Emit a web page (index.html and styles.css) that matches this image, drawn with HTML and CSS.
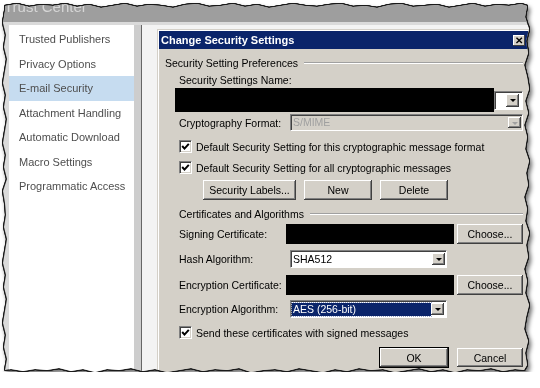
FILE: index.html
```html
<!DOCTYPE html>
<html lang="en">
<head>
    <meta charset="UTF-8">
    <meta name="viewport" content="width=device-width, initial-scale=1.0">
    <title>Trust Center - Change Security Settings</title>
    <link rel="stylesheet" href="styles.css">
</head>
<body>
    <div class="sheet">
        <div class="paper">
            <div class="app-title"><span>Trust Center</span></div>

            <div class="frame">
                <ul class="nav">
                    <li>Trusted Publishers</li>
                    <li>Privacy Options</li>
                    <li class="active">E-mail Security</li>
                    <li>Attachment Handling</li>
                    <li>Automatic Download</li>
                    <li>Macro Settings</li>
                    <li>Programmatic Access</li>
                </ul>
                <div class="splitter"></div>

                <div class="pane">
                    <div class="dialog">
                        <div class="dlg-title">
                            <span>Change Security Settings</span>
                            <span class="close">&#x2715;</span>
                        </div>

                        <div class="dlg-body">
                            <div class="group first"><span>Security Setting Preferences</span></div>

                            <div class="field-label">Security Settings Name:</div>
                            <div class="name-row">
                                <div class="redact name"></div>
                                <div class="combo tail"><span class="drop"></span></div>
                            </div>

                            <div class="row crypto">
                                <label>Cryptography Format:</label>
                                <div class="combo disabled wide">
                                    <span class="value">S/MIME</span>
                                    <span class="drop"></span>
                                </div>
                            </div>

                            <div class="check-row first-check">
                                <span class="check"><svg viewBox="0 0 9 9"><polyline points="1.2,4 3.5,6.6 7.8,1.8"/></svg></span>
                                Default Security Setting for this cryptographic message format
                            </div>
                            <div class="check-row">
                                <span class="check"><svg viewBox="0 0 9 9"><polyline points="1.2,4 3.5,6.6 7.8,1.8"/></svg></span>
                                Default Security Setting for all cryptographic messages
                            </div>

                            <div class="btn-row labels">
                                <button class="btn wide-btn">Security Labels...</button>
                                <button class="btn">New</button>
                                <button class="btn">Delete</button>
                            </div>

                            <div class="group second"><span>Certificates and Algorithms</span></div>

                            <div class="row cert first-cert">
                                <label>Signing Certificate:</label>
                                <div class="redact cert-box"></div>
                                <button class="btn choose">Choose...</button>
                            </div>

                            <div class="row algo hash">
                                <label>Hash Algorithm:</label>
                                <div class="combo short">
                                    <span class="value">SHA512</span>
                                    <span class="drop"></span>
                                </div>
                            </div>

                            <div class="row cert second-cert">
                                <label>Encryption Certificate:</label>
                                <div class="redact cert-box"></div>
                                <button class="btn choose">Choose...</button>
                            </div>

                            <div class="row algo enc">
                                <label>Encryption Algorithm:</label>
                                <div class="combo short">
                                    <span class="value selected">AES (256-bit)</span>
                                    <span class="drop"></span>
                                </div>
                            </div>

                            <div class="check-row last-check">
                                <span class="check"><svg viewBox="0 0 9 9"><polyline points="1.2,4 3.5,6.6 7.8,1.8"/></svg></span>
                                Send these certificates with signed messages
                            </div>

                            <div class="btn-row actions">
                                <button class="btn default">OK</button>
                                <button class="btn cancel">Cancel</button>
                            </div>
                        </div>
                    </div>
                </div>
            </div>
        </div>
    </div>
</body>
</html>
```

FILE: styles.css
```css
body {
    margin: 0;
    background: #ffffff;
    font-family: 'Liberation Sans', Arial, sans-serif;
}

/* torn paper look */
.sheet {
    margin: 3px 0 0 3px;
    width: 527px;
    height: 369px;
    filter: drop-shadow(1px 0 0 #1a1a1a) drop-shadow(-1px 0 0 #1a1a1a) drop-shadow(0 1px 0 #1a1a1a) drop-shadow(0 -1px 0 #1a1a1a) drop-shadow(2px 3px 2px rgba(0, 0, 0, 0.55));
}

.paper {
    width: 527px;
    height: 369px;
    overflow: hidden;
    background: #dadada;
    display: flex;
    flex-direction: column;
    clip-path: polygon(2px 3px, 14px 1px, 26px 4px, 38px 2px, 50px 3px, 62px 1px, 74px 4px, 86px 2px, 98px 5px, 110px 3px, 122px 1px, 134px 4px, 146px 2px, 158px 3px, 170px 5px, 182px 2px, 194px 1px, 206px 4px, 218px 3px, 230px 1px, 242px 4px, 254px 2px, 266px 5px, 278px 3px, 290px 1px, 302px 3px, 314px 4px, 326px 2px, 338px 1px, 350px 4px, 362px 3px, 374px 5px, 386px 2px, 398px 1px, 410px 4px, 422px 3px, 434px 2px, 446px 5px, 458px 3px, 470px 1px, 482px 4px, 494px 2px, 506px 3px, 518px 1px, 524px 3px,
        522px 14px, 526px 26px, 523px 38px, 525px 50px, 521px 62px, 524px 74px, 526px 86px, 522px 98px, 525px 110px, 521px 122px, 524px 134px, 522px 146px, 526px 158px, 523px 170px, 525px 182px, 521px 194px, 524px 206px, 522px 218px, 526px 230px, 523px 242px, 525px 254px, 521px 266px, 524px 278px, 522px 290px, 526px 302px, 523px 314px, 521px 326px, 525px 338px, 522px 350px, 524px 362px, 521px 367px,
        512px 366px, 500px 368px, 488px 365px, 476px 367px, 464px 366px, 452px 369px, 440px 366px, 428px 368px, 416px 365px, 404px 367px, 392px 369px, 380px 366px, 368px 367px, 356px 365px, 344px 368px, 332px 366px, 320px 369px, 308px 367px, 296px 365px, 284px 368px, 272px 366px, 260px 367px, 248px 369px, 236px 365px, 224px 367px, 212px 366px, 200px 368px, 188px 365px, 176px 367px, 164px 369px, 152px 366px, 140px 368px, 128px 365px, 116px 367px, 104px 366px, 92px 369px, 80px 366px, 68px 368px, 56px 365px, 44px 367px, 32px 366px, 20px 368px, 8px 366px, 2px 367px,
        4px 356px, 1px 344px, 3px 332px, 0 320px, 2px 308px, 4px 296px, 1px 284px, 3px 272px, 0 260px, 2px 248px, 4px 236px, 1px 224px, 3px 212px, 2px 200px, 0 188px, 4px 176px, 1px 164px, 3px 152px, 0 140px, 2px 128px, 4px 116px, 1px 104px, 3px 92px, 0 80px, 2px 68px, 4px 56px, 1px 44px, 3px 32px, 0 20px, 2px 8px);
}

.app-title {
    height: 19px;
    flex-shrink: 0;
    background: #9e9e9e;
    color: #d6d6d6;
    font-size: 15px;
    line-height: 15px;
    padding-left: 1px;
    overflow: hidden;
}

.app-title span {
    display: block;
    margin-top: -4px;
}

.frame {
    flex: 1;
    display: flex;
    padding: 3px 0 0 6px;
    min-height: 0;
}

/* left navigation */
.nav {
    width: 125px;
    margin: 0;
    padding: 2px 0 0 0;
    list-style: none;
    background: #ffffff;
}

.nav li {
    height: 24.5px;
    line-height: 24.5px;
    padding-left: 10px;
    font-size: 11px;
    color: #4e4e4e;
}

.nav li.active {
    background: #c6dcf0;
}

.splitter {
    width: 7px;
    background: #cdcdcd;
    border-right: 1px solid #666666;
}

.pane {
    flex: 1;
    background: #f3f3f3;
    padding-left: 15px;
    overflow: hidden;
}

/* dialog */
.dialog {
    width: 369px;
    margin-top: 4px;
    height: 400px;
    padding: 1px;
    border: 1px solid #d4d0c8;
    box-shadow: inset 1px 1px #ffffff;
    background: #d4d0c8;
    font-size: 10.5px;
    color: #000000;
}

.dlg-title {
    height: 18px;
    background: #0a246a;
    color: #ffffff;
    font-weight: bold;
    font-size: 11px;
    display: flex;
    align-items: center;
    justify-content: space-between;
    padding: 0 3px 0 2px;
}

.close {
    width: 12px;
    height: 11px;
    background: #d4d0c8;
    color: #000000;
    font-size: 10px;
    font-weight: bold;
    line-height: 11px;
    text-align: center;
    box-shadow: inset -1px -1px #404040, inset 1px 1px #ffffff;
}

.dlg-body {
    padding-left: 20px;
}

.group {
    display: flex;
    align-items: center;
    gap: 6px;
    height: 14px;
}

.group::after {
    content: '';
    flex: 1;
    height: 0;
    border-top: 1px solid #a0a0a0;
    border-bottom: 1px solid #ffffff;
}

.group.first {
    margin: 7px 0 0 -14px;
    width: 358px;
}

.group.second {
    margin-top: 7px;
    width: 344px;
}

.field-label {
    margin-top: 3px;
    height: 14px;
    line-height: 14px;
}

.name-row {
    display: flex;
    align-items: center;
    margin: 1px 0 0 -4px;
    width: 348px;
    height: 24px;
}

.redact {
    background: #000000;
}

.redact.name {
    width: 319px;
    height: 24px;
}

.combo {
    position: relative;
    display: flex;
    align-items: center;
    box-sizing: border-box;
    background: #ffffff;
    border: 1px solid;
    border-color: #808080 #ffffff #ffffff #808080;
    box-shadow: inset 1px 1px #404040;
}

.combo.tail {
    flex: 1;
    height: 19px;
    justify-content: flex-end;
    padding-right: 2px;
}

.combo .value {
    flex: 1;
    padding-left: 2px;
    line-height: 13px;
}

.combo .value.selected {
    flex: none;
    width: 138px;
    margin-left: 1px;
    padding-left: 1px;
    background: #0a246a;
    color: #ffffff;
    outline: 1px dotted #9aa6c8;
}

.drop {
    position: relative;
    flex-shrink: 0;
    width: 13px;
    height: calc(100% - 4px);
    margin-right: 1px;
    background: #d4d0c8;
    box-shadow: inset -1px -1px #404040, inset 1px 1px #ffffff, inset -2px -2px #808080;
}

.drop::after {
    content: '';
    position: absolute;
    left: 4px;
    top: 50%;
    margin-top: -1px;
    border-left: 3px solid transparent;
    border-right: 3px solid transparent;
    border-top: 3px solid #000000;
}

.combo.disabled {
    background: #d4d0c8;
    color: #a0a0a0;
}

.combo.disabled .drop::after {
    border-top-color: #a0a0a0;
}

.row {
    display: flex;
    align-items: center;
    width: 344px;
}

.row label {
    width: 111px;
    flex-shrink: 0;
}

.row.crypto {
    margin-top: 2px;
    height: 17px;
}

.combo.wide {
    width: 233px;
    height: 17px;
}

.check-row {
    display: flex;
    align-items: center;
    gap: 4px;
    height: 13px;
    margin-top: 8px;
}

.check-row.first-check {
    margin-top: 9px;
}

.check-row.last-check {
    margin-top: 8px;
}

.check {
    width: 13px;
    height: 13px;
    box-sizing: border-box;
    background: #ffffff;
    border: 1px solid;
    border-color: #808080 #ffffff #ffffff #808080;
    box-shadow: inset 1px 1px #404040, inset -1px -1px #d4d0c8;
    padding: 1px;
}

.check svg {
    display: block;
    width: 9px;
    height: 9px;
}

.check polyline {
    fill: none;
    stroke: #000000;
    stroke-width: 2;
}

.btn {
    font-family: inherit;
    font-size: 10.5px;
    color: #000000;
    background: #d4d0c8;
    border: none;
    padding: 0;
    box-shadow: inset -1px -1px #404040, inset 1px 1px #ffffff, inset -2px -2px #808080;
}

.btn-row {
    display: flex;
    gap: 8px;
}

.btn-row.labels {
    margin: 6px 0 0 24px;
    height: 20px;
}

.btn-row .btn {
    width: 68px;
}

.btn-row .btn.wide-btn {
    width: 93px;
}

.row.cert {
    height: 20px;
}

.row.cert label {
    width: 107px;
}

.row.first-cert {
    margin-top: 3px;
}

.row.second-cert {
    margin-top: 7px;
}

.redact.cert-box {
    width: 168px;
    height: 20px;
}

.btn.choose {
    width: 66px;
    height: 20px;
    margin-left: 3px;
}

.row.algo {
    height: 18px;
}

.row.hash {
    margin-top: 6px;
}

.row.enc {
    margin-top: 5px;
}

.combo.short {
    width: 157px;
    height: 18px;
}

.btn-row.actions {
    width: 344px;
    margin-top: 9px;
    height: 19px;
    justify-content: flex-end;
    gap: 9px;
}

.btn.default {
    box-shadow: 0 0 0 1px #000000, inset -1px -1px #404040, inset 1px 1px #ffffff, inset -2px -2px #808080;
}

.btn-row .btn.cancel {
    width: 66px;
}
```
